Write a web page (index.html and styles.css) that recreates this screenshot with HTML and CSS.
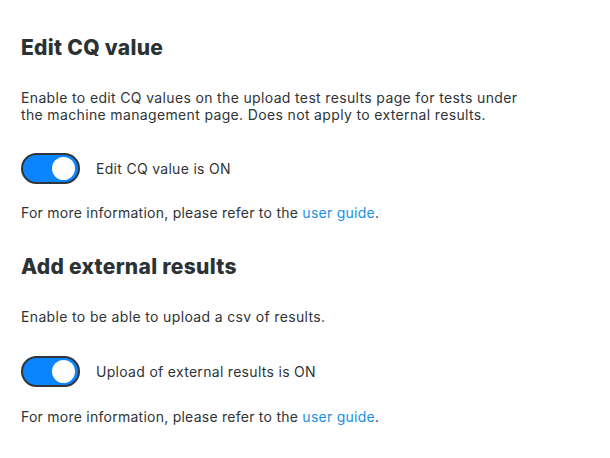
FILE: index.html
```html
<!DOCTYPE html>
<html lang="en">
<head>
<meta charset="utf-8">
<link rel="stylesheet" href="styles.css">
</head>
<body>
<main class="settings">
  <section class="setting">
    <h2 class="setting-title">Edit CQ value</h2>
    <p class="setting-desc"><span class="desc-line">Enable to edit CQ values on the upload test results page for tests under</span><span class="desc-line">the machine management page. Does not apply to external results.</span></p>
    <div class="toggle-row">
      <span class="toggle on"><span class="knob"></span></span>
      <span class="toggle-label">Edit CQ value is ON</span>
    </div>
    <p class="setting-note">For more information, please refer to the <a class="link" href="#">user guide</a>.</p>
  </section>
  <section class="setting">
    <h2 class="setting-title">Add external results</h2>
    <p class="setting-desc">Enable to be able to upload a csv of results.</p>
    <div class="toggle-row">
      <span class="toggle on"><span class="knob"></span></span>
      <span class="toggle-label">Upload of external results is ON</span>
    </div>
    <p class="setting-note">For more information, please refer to the <a class="link" href="#">user guide</a>.</p>
  </section>
</main>
</body>
</html>
```
FILE: styles.css
```css
html, body {
  margin: 0;
  padding: 0;
  background: #ffffff;
}
body {
  font-family: "Inter", "Open Sans", sans-serif;
  color: #2f3437;
  font-size: 14px;
  letter-spacing: 0.35px;
}
.settings {
  padding: 34px 21px 0 21px;
}
.setting-title {
  margin: 0;
  font-size: 21px;
  line-height: 28px;
  font-weight: 800;
  letter-spacing: 0.3px;
  color: #2b3236;
}
.setting-desc {
  margin: 27px 0 0 0;
  line-height: 17px;
}
.desc-line {
  display: block;
  height: 17px;
}
.toggle-row {
  display: flex;
  align-items: center;
  gap: 16px;
  margin-top: 30px;
}
.toggle {
  box-sizing: border-box;
  width: 59px;
  height: 31px;
  border: 2px solid #30363a;
  border-radius: 16px;
  background: #0a84ff;
  display: flex;
  align-items: center;
  justify-content: flex-end;
  padding-right: 3px;
}
.knob {
  width: 23px;
  height: 23px;
  border-radius: 50%;
  background: #ffffff;
}
.toggle-label {
  font-size: 14px;
  letter-spacing: 0.3px;
}
.setting-note {
  margin: 20px 0 0 0;
  line-height: 17px;
  letter-spacing: 0.25px;
}
.link {
  color: #1a8fe8;
  text-decoration: none;
}
.setting + .setting {
  margin-top: 32px;
}
.setting + .setting .toggle-row {
  margin-top: 31px;
}
.setting + .setting .setting-note {
  margin-top: 21px;
}
```
